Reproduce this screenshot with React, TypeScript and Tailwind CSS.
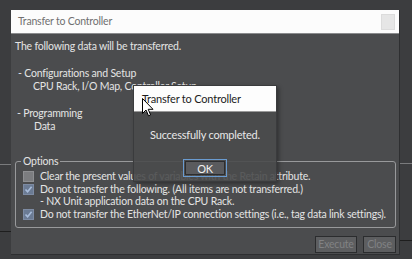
import React from 'react';

const font = { fontFamily: 'Lato, "Noto Sans", sans-serif' };

const Check = ({ checked }: { checked: boolean }) => (
  <div
    className={`w-[11px] h-[11px] shrink-0 border ${
      checked ? 'bg-[#6b7b94] border-[#7d8ba3]' : 'bg-[#7c7d80] border-[#8e8f92]'
    } flex items-center justify-center`}
  >
    {checked && (
      <svg width="9" height="9" viewBox="0 0 9 9">
        <path d="M1.5 4.5 L3.6 6.8 L7.6 1.8" fill="none" stroke="#a9bddb" strokeWidth="1.6" />
      </svg>
    )}
  </div>
);

const Cursor = () => (
  <svg width="12" height="19" viewBox="0 0 12 19" className="absolute left-[142px] top-[98px]">
    <path d="M0.5 0.5 L0.5 15.5 L4 12 L6.5 17.8 L8.6 16.9 L6.2 11.3 L11 11.3 Z" fill="#ffffff" stroke="#000000" strokeWidth="1" />
  </svg>
);

export default function App() {
  return (
    <div className="relative w-[412px] h-[259px] overflow-hidden bg-[#3c3d3f] text-[10.5px] tracking-[-0.2px] leading-none text-[#e4e4e4] whitespace-nowrap" style={font}>
      <div className="flex h-full">
        {/* left strip of the app behind */}
        <div className="w-[11px] flex flex-col">
          <div className="h-[164px]" />
          <div className="h-px bg-[#7a7b7d]" />
          <div className="h-[66px]" />
          <div className="h-px bg-[#1e1e1e]" />
        </div>

        {/* main dialog */}
        <div className="mt-[10px] w-[389px] h-[245px] flex flex-col bg-[#4b4c4e] border-r border-[#2e2f31] border-b">
          <div className="h-[24px] shrink-0 bg-[#fcfcfc] border-b border-[#8a8b8d] flex items-center justify-between pl-[7px] pr-[4px]">
            <span className="text-[#707070]">Transfer to Controller</span>
            <div className="w-[14px] h-[16px] bg-[#e6e6e6] border border-[#dcdcdc]" />
          </div>

          <div className="flex-1 flex flex-col pl-[4px] pr-[3px]">
            <div className="mt-[7px]">The following data will be transferred.</div>
            <div className="mt-[16px] pl-[3px]">- Configurations and Setup</div>
            <div className="mt-[3px] pl-[18px]">CPU Rack, I/O Map, Controller Setup</div>
            <div className="mt-[16px] pl-[2px]">- Programming</div>
            <div className="mt-[3px] pl-[19px]">Data</div>

            <div className="relative mt-[29px] h-[67px] border border-[#98999b] rounded-[3px] flex flex-col pl-[7px] pt-[9px] gap-[0.5px]">
              <span className="absolute -top-[6px] left-[5px] px-[2px] bg-[#4b4c4e]">Options</span>
              <div className="flex items-center gap-[6px] h-[12px]">
                <Check checked={false} />
                <span>Clear the present values of variables with the Retain attribute.</span>
              </div>
              <div className="flex items-center gap-[6px] h-[12px]">
                <Check checked />
                <span>Do not transfer the following. (All items are not transferred.)</span>
              </div>
              <div className="flex items-center h-[12px] pl-[17px]">
                <span>- NX Unit application data on the CPU Rack.</span>
              </div>
              <div className="flex items-center gap-[6px] h-[12px]">
                <Check checked />
                <span>Do not transfer the EtherNet/IP connection settings (i.e., tag data link settings).</span>
              </div>
            </div>

            <div className="mt-[8px] flex justify-end gap-[6px]">
              <div className="w-[42px] h-[17px] bg-[#5d5e60] border border-[#2b2c2e] flex items-center justify-center text-[#818284]">Execute</div>
              <div className="w-[33px] h-[17px] bg-[#5d5e60] border border-[#2b2c2e] flex items-center justify-center text-[#818284]">Close</div>
            </div>
          </div>
        </div>

        {/* right strip */}
        <div className="flex-1 flex flex-col">
          <div className="h-[163px]" />
          <div className="h-px bg-[#7a7b7d]" />
          <div className="h-[76px]" />
          <div className="h-px bg-[#1e1e1e]" />
        </div>
      </div>

      {/* message box over the dialog */}
      <div className="absolute left-[133px] top-[85px] w-[144px] h-[97px] flex flex-col bg-[#4a4b4d]/90 border border-[#3a3b3d] shadow-[2px_2px_4px_rgba(0,0,0,0.35)]">
        <div className="h-[26px] shrink-0 bg-[#fdfdfd] border-b border-[#9a9a9a] flex items-center pl-[8px] text-[#1c1c1c] text-[11px]">
          Transfer to Controller
        </div>
        <div className="flex-1 flex flex-col items-center">
          <div className="mt-[17px] text-[#e8e8e8] text-[11px]">Successfully completed.</div>
          <div className="mt-[19px] w-[44px] h-[18px] border border-[#6a9bd0] p-px">
            <div className="w-full h-full bg-[#5a5b5e] border border-[#2c2d2f] flex items-center justify-center text-[#f0f0f0] text-[11px]">OK</div>
          </div>
        </div>
      </div>

      <Cursor />
    </div>
  );
}
